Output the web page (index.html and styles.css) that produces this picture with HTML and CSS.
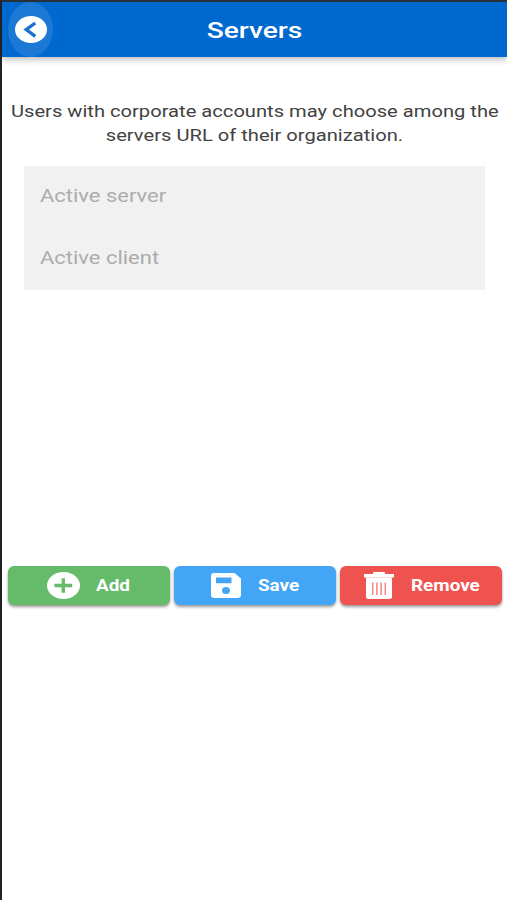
FILE: index.html
```html
<!DOCTYPE html>
<html lang="en">
<head>
<meta charset="utf-8">
<title>Servers</title>
<link rel="stylesheet" href="styles.css">
</head>
<body>
<div class="screen">
  <header class="toolbar">
    <button class="back" aria-label="Back">
      <svg width="32" height="27" viewBox="0 0 32 27"><ellipse cx="16" cy="13.5" rx="16" ry="13.5" fill="#fff"/><path d="M20.3 7L11.2 13.6L20.3 20.4" fill="none" stroke="#1b72ce" stroke-width="3.3"/></svg>
    </button>
    <h1 class="title"><span class="wide">Servers</span></h1>
  </header>
  <main>
    <p class="intro"><span class="wide">Users with corporate accounts may choose among the</span><span class="wide">servers URL of their organization.</span></p>
    <div class="fields">
      <div class="field"><span class="wide">Active server</span></div>
      <div class="field"><span class="wide">Active client</span></div>
    </div>
    <div class="actions">
      <button class="btn add">
        <svg width="33" height="27" viewBox="0 0 33 27"><ellipse cx="16.5" cy="13.5" rx="16.5" ry="13.5" fill="#fff"/><path d="M16.3 6.2V20.8M7.4 13.5H25.2" stroke="#66bb6a" stroke-width="3.4"/></svg>
        <span class="wide">Add</span>
      </button>
      <button class="btn save">
        <svg width="30" height="25" viewBox="0 0 30 25"><path fill="#fff" fill-rule="evenodd" d="M3 0H23.5L30 5.5V22Q30 25 26.5 25H3.5Q0 25 0 22V3Q0 0 3 0ZM5 4.6V10.2H20.5V4.6ZM15 14.1A4 3.5 0 1 0 15 21.1A4 3.5 0 1 0 15 14.1Z"/></svg>
        <span class="wide">Save</span>
      </button>
      <button class="btn remove">
        <svg width="30" height="27" viewBox="0 0 30 27"><path fill="#fff" d="M0 2H9V1Q9 0 10.5 0H19.5Q21 0 21 1V2H30V5.5H0Z"/><path fill="#fff" d="M2 5.5H28V24.5Q28 27 25.5 27H4.5Q2 27 2 24.5Z"/><path d="M8.7 10.5V23M12.9 10.5V23M17.1 10.5V23M21.3 10.5V23" stroke="#ef5350" stroke-width="1.5" opacity=".7"/></svg>
        <span class="wide">Remove</span>
      </button>
    </div>
  </main>
</div>
</body>
</html>
```
FILE: styles.css
```css
* { box-sizing: border-box; }
body { margin: 0; background: #fff; font-family: Roboto, sans-serif; }
.screen { height: 900px; border-left: 2px solid #202124; border-top: 2px solid #263238; overflow: hidden; }
button { border: 0; padding: 0; font: inherit; }
svg { display: block; flex: none; }
.wide { display: block; white-space: nowrap; transform: scaleX(1.185); }
.toolbar { display: grid; grid-template-columns: 57px 1fr 57px; align-items: center; height: 55px; background: #0069d0; color: #fff; box-shadow: 0 2px 7px rgba(0,0,0,.3); }
.back { display: flex; align-items: center; justify-content: center; width: 45px; height: 55px; margin-left: 6px; border-radius: 50%; background: #1b78d4; }
.title { margin: 0; padding-top: 2px; font-size: 22px; line-height: 26px; font-weight: 500; text-align: center; }
.title .wide { transform: scaleX(1.28); }
.intro { display: flex; flex-direction: column; align-items: center; margin: 42px 0 0; font-size: 17px; line-height: 24px; color: #424242; }
.fields { margin: 19px 22px 0; height: 124px; background: #f1f1f1; }
.field { display: flex; align-items: center; height: 62px; padding: 0 0 4px 16px; font-size: 18px; color: #acacac; }
.field .wide { transform: scaleX(1.22); transform-origin: left; }
.actions { display: grid; grid-template-columns: repeat(3, 161.5px); gap: 4.5px; margin: 276px 0 0 6px; }
.btn { display: flex; align-items: center; height: 39px; border-radius: 6px; color: #fff; font-size: 16px; font-weight: 700; box-shadow: 0 2px 3px rgba(0,0,0,.4); }
.btn .wide { transform: scaleX(1.18); transform-origin: left; }
.add { background: #66bb6a; padding-left: 39px; gap: 16px; }
.save { background: #42a5f5; padding-left: 37px; gap: 17px; }
.remove { background: #ef5350; padding-left: 24px; gap: 17px; }
```
